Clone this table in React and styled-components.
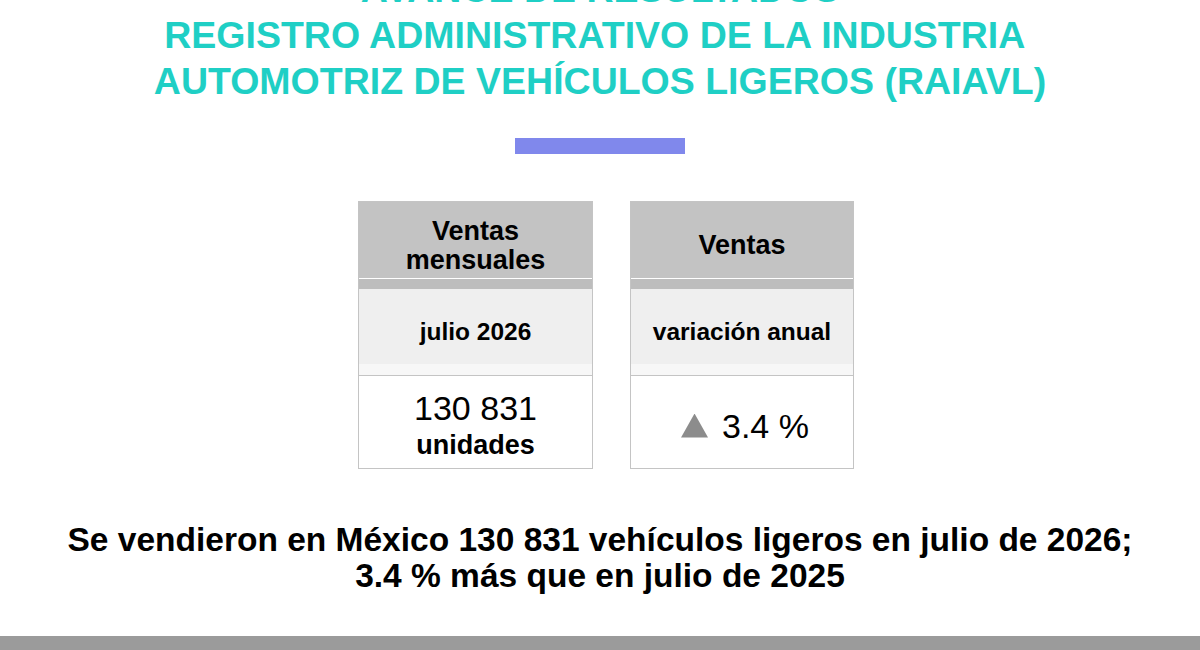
import React from 'react';
import styled, { createGlobalStyle } from 'styled-components';

const GlobalStyle = createGlobalStyle`
  html, body {
    margin: 0;
    padding: 0;
    background: #ffffff;
  }
  body {
    font-family: "Liberation Sans", Arial, Helvetica, sans-serif;
    color: #000;
  }
`;

const Page = styled.div`
  height: 650px;
  overflow: hidden;
  display: flex;
  flex-direction: column;
  align-items: center;
`;

// the first title line sits mostly above the fold, as in the slide
const Title = styled.h1`
  margin: -34px 0 0;
  font-size: 37.5px;
  line-height: 46px;
  font-weight: 700;
  color: #1fcfc5;
  text-align: center;
`;

const Rule = styled.div`
  width: 170px;
  height: 16px;
  margin-top: 34px;
  background: #8088ec;
`;

const Cards = styled.div`
  display: flex;
  gap: 37px;
  margin-top: 47px;
  padding-left: 12px;
`;

const Card = styled.div`
  width: ${props => props.$width}px;
  box-sizing: border-box;
  border: 1px solid #c4c4c4;
  display: flex;
  flex-direction: column;
`;

const HeadCell = styled.div`
  height: 87px;
  display: flex;
  align-items: center;
  justify-content: center;
  text-align: center;
  font-size: 27px;
  line-height: 29px;
  font-weight: 700;
  background: linear-gradient(
    to bottom,
    #c3c3c3 0 76px,
    #ffffff 76px 77px,
    #bdbdbd 77px 100%
  );
`;

const SubCell = styled.div`
  height: 86px;
  display: flex;
  align-items: center;
  justify-content: center;
  font-size: 24.5px;
  font-weight: 700;
  border-bottom: 1px solid #c4c4c4;
  background: linear-gradient(
    to bottom,
    #efefef 0 75px,
    #f7f7f7 75px 100%
  );
`;

const ValueCell = styled.div`
  height: 92px;
  box-sizing: border-box;
  padding-top: 7px;
  display: flex;
  flex-direction: column;
  align-items: center;
  justify-content: center;
  background: #ffffff;
`;

const Number = styled.span`
  font-size: 34px;
  line-height: 36px;
  font-weight: 400;
`;

const Unit = styled.span`
  margin-top: 3px;
  font-size: 27px;
  line-height: 33px;
  font-weight: 700;
`;

const Change = styled.div`
  display: flex;
  align-items: baseline;
  gap: 14px;
  font-size: 34px;
  line-height: 36px;
  padding-left: 6px;
`;

const UpArrow = styled.span`
  display: inline-block;
  width: 27px;
  height: 24px;
  background: #8c8c8c;
  clip-path: polygon(50% 0, 100% 100%, 0 100%);
`;

const Summary = styled.p`
  margin: 53px 0 0;
  font-size: 33.5px;
  line-height: 36px;
  font-weight: 700;
  text-align: center;
  color: #000;
`;

const Footer = styled.div`
  align-self: stretch;
  margin-top: auto;
  height: 14px;
  background: #9b9b9b;
`;

export default function App() {
  return (
    <>
      <GlobalStyle />
      <Page>
        <Title>
          AVANCE DE RESULTADOS
          <br />
          REGISTRO ADMINISTRATIVO DE LA INDUSTRIA{'\u00a0'}
          <br />
          AUTOMOTRIZ DE VEHÍCULOS LIGEROS (RAIAVL)
        </Title>

        <Rule />

        <Cards>
          <Card $width={235}>
            <HeadCell>
              Ventas
              <br />
              mensuales
            </HeadCell>
            <SubCell>julio 2026</SubCell>
            <ValueCell>
              <Number>130 831</Number>
              <Unit>unidades</Unit>
            </ValueCell>
          </Card>

          <Card $width={224}>
            <HeadCell>Ventas</HeadCell>
            <SubCell>variación anual</SubCell>
            <ValueCell>
              <Change>
                <UpArrow />
                <span>3.4 %</span>
              </Change>
            </ValueCell>
          </Card>
        </Cards>

        <Summary>
          Se vendieron en México 130 831 vehículos ligeros en julio de 2026;
          <br />
          3.4 % más que en julio de 2025
        </Summary>

        <Footer />
      </Page>
    </>
  );
}
